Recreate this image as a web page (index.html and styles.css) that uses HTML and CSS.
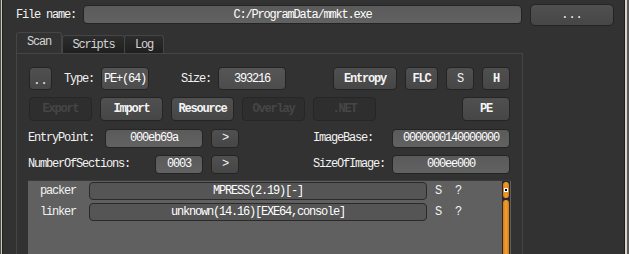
FILE: index.html
```html
<!DOCTYPE html>
<html>
<head>
  <title>Detect It Easy</title>
  <link rel="stylesheet" href="styles.css">
</head>
<body>

  <div class="frame">
    <div class="edge-left"></div>

    <div class="app">
      <div class="file-row">
        <span class="label file-label">File name:</span>
        <div class="field file-field">C:/ProgramData/mmkt.exe</div>
        <div class="btn browse-btn">...</div>
      </div>

      <div class="tabs">
        <div class="tab active tab-scan">Scan</div>
        <div class="tab tab-scripts">Scripts</div>
        <div class="tab tab-log">Log</div>
      </div>

      <div class="pane">
        <div class="row row-info">
          <div class="btn dots-btn">..</div>
          <span class="label lbl-type">Type:</span>
          <div class="field val-type">PE+(64)</div>
          <span class="label lbl-size">Size:</span>
          <div class="field val-size">393216</div>
          <div class="btn bold btn-entropy">Entropy</div>
          <div class="btn bold btn-flc">FLC</div>
          <div class="btn btn-s">S</div>
          <div class="btn bold btn-h">H</div>
        </div>

        <div class="row row-actions">
          <div class="btn bold disabled btn-wide">Export</div>
          <div class="btn bold btn-wide">Import</div>
          <div class="btn bold btn-wide">Resource</div>
          <div class="btn bold disabled btn-wide">Overlay</div>
          <div class="btn bold disabled btn-wide">.NET</div>
          <div class="btn bold btn-pe">PE</div>
        </div>

        <div class="row row-field">
          <span class="label lbl-entry">EntryPoint:</span>
          <div class="field val-entry">000eb69a</div>
          <div class="btn btn-go">&gt;</div>
          <span class="label lbl-right">ImageBase:</span>
          <div class="field val-right">0000000140000000</div>
        </div>

        <div class="row row-field">
          <span class="label lbl-sections">NumberOfSections:</span>
          <div class="field val-sections">0003</div>
          <div class="btn btn-go">&gt;</div>
          <span class="label lbl-right">SizeOfImage:</span>
          <div class="field val-right">000ee000</div>
        </div>

        <div class="results">
          <div class="result-list">
            <div class="result">
              <span class="label res-name">packer</span>
              <div class="res-value">MPRESS(2.19)[-]</div>
              <span class="label res-flag">S</span>
              <span class="label res-flag">?</span>
            </div>
            <div class="result">
              <span class="label res-name">linker</span>
              <div class="res-value">unknown(14.16)[EXE64,console]</div>
              <span class="label res-flag">S</span>
              <span class="label res-flag">?</span>
            </div>
          </div>
          <div class="scrollbar">
            <div class="scroll-handle"><span class="scroll-dot"></span></div>
            <div class="scroll-bar"></div>
          </div>
        </div>
      </div>
    </div>

    <div class="edge-right"></div>
  </div>

</body>
</html>
```

FILE: styles.css
```css
body {
  margin: 0;
  background-color: #323232;
  color: #f0f0f0;
  font-family: "Liberation Mono", monospace;
  font-size: 12px;
  letter-spacing: -1.2px;
}

.frame {
  display: flex;
  width: 629px;
  height: 254px;
  overflow: hidden;
}

.edge-left {
  width: 3px;
  background: linear-gradient(to right, #4a4a4a 0 1px, #cfcbc3 1px 2px, #1f1f1f 2px 3px);
}

.edge-right {
  width: 5px;
  background: linear-gradient(to right, #1f1f1f 0 1px, #d8d4cc 1px 3px, #5c5c5c 3px 5px);
}

.app {
  flex: 1;
  padding: 4px 0 0 13px;
}

.label {
  white-space: nowrap;
  color: #f2f2f2;
}

.field,
.btn {
  box-sizing: border-box;
  display: flex;
  align-items: center;
  justify-content: center;
  white-space: nowrap;
  border: 1px solid #242424;
  border-radius: 4px;
}

.field {
  background: linear-gradient(#5a5a5a, #626262);
  color: #ffffff;
}

.btn {
  background: linear-gradient(#505050, #464646);
  color: #f4f4f4;
}

.btn.bold {
  font-weight: bold;
}

.btn.disabled {
  background: #2e2e2e;
  border-color: #262626;
  color: #464646;
}

/* file name row */

.file-row {
  display: flex;
  align-items: center;
  height: 21px;
}

.file-label {
  width: 67px;
}

.file-field {
  width: 439px;
  height: 19px;
}

.browse-btn {
  width: 84px;
  height: 22px;
  margin-left: 8px;
  border-radius: 5px;
  letter-spacing: 0;
}

/* tabs */

.tabs {
  display: flex;
  align-items: flex-end;
  height: 21px;
  margin-top: 7px;
}

.tab {
  box-sizing: border-box;
  height: 18px;
  display: flex;
  align-items: center;
  justify-content: center;
  border: 1px solid #454545;
  border-bottom: none;
  border-radius: 3px 3px 0 0;
  background: linear-gradient(#2d2d2d, #1f1f1f);
  color: #d4d4d4;
}

.tab.active {
  height: 21px;
  background: #323232;
  padding-bottom: 2px;
}

.tab-scan {
  width: 46px;
}

.tab-scripts {
  width: 63px;
}

.tab-log {
  width: 40px;
  margin-left: -1px;
}

.pane {
  box-sizing: border-box;
  width: 507px;
  height: 260px;
  border: 1px solid #454545;
  padding: 13px 0 0 12px;
}

/* rows */

.row {
  display: flex;
  align-items: center;
}

.row-info {
  height: 23px;
}

.row-info .field,
.row-info .btn {
  height: 23px;
}

.dots-btn {
  width: 23px;
  letter-spacing: 0;
  padding-top: 4px;
}

.lbl-type,
.lbl-size {
  width: 37px;
  margin-left: 12px;
}

.lbl-size {
  margin-left: 32px;
}

.val-type {
  width: 48px;
  background: linear-gradient(#565656, #4c4c4c);
}

.val-size {
  width: 68px;
  background: linear-gradient(#565656, #4c4c4c);
}

.btn-entropy {
  width: 64px;
  margin-left: 47px;
}

.btn-flc {
  width: 33px;
  margin-left: 8px;
}

.btn-s,
.btn-h {
  width: 28px;
  margin-left: 8px;
}

.row-actions {
  height: 24px;
  margin-top: 7px;
  gap: 8px;
}

.row-actions .btn {
  height: 24px;
}

.btn-wide {
  width: 63px;
}

.btn-pe {
  width: 48px;
  margin-left: 78px;
}

.row-field {
  height: 18px;
  margin-top: 8px;
}

.row-field .field,
.row-field .btn {
  height: 19px;
}

.lbl-entry {
  width: 76px;
  margin-left: -1px;
}

.lbl-sections {
  width: 126px;
  margin-left: -1px;
}

.val-entry {
  width: 98px;
  margin-left: 1px;
}

.val-sections {
  width: 48px;
  margin-left: 1px;
}

.btn-go {
  width: 28px;
  margin-left: 8px;
}

.lbl-right {
  width: 79px;
  margin-left: 74px;
}

.val-right {
  width: 118px;
}

/* detection results */

.results {
  display: flex;
  width: 483px;
  height: 80px;
  margin: 7px 0 0 -1px;
  background: #606060;
  border-top: 1px solid #3a3a3a;
}

.result-list {
  flex: 1;
  padding: 1px 0 0 12px;
}

.result {
  display: flex;
  align-items: center;
  height: 18px;
  margin-bottom: 3px;
}

.res-name {
  width: 49px;
}

.res-value {
  box-sizing: border-box;
  width: 338px;
  height: 18px;
  display: flex;
  align-items: center;
  justify-content: center;
  background: #555555;
  border: 1px solid #2a2a2a;
  border-radius: 4px;
  color: #ffffff;
}

.res-flag {
  width: 20px;
  margin-left: 8px;
}

.res-flag + .res-flag {
  margin-left: 0;
}

.scrollbar {
  width: 8px;
  margin-right: 1px;
  background: #2a2a2a;
  display: flex;
  flex-direction: column;
  align-items: center;
  gap: 2px;
  padding-top: 1px;
}

.scroll-handle {
  width: 6px;
  height: 16px;
  border-radius: 3px;
  background: linear-gradient(to right, #d27a14, #f5a032, #d27a14);
  display: flex;
  align-items: center;
  justify-content: center;
}

.scroll-dot {
  width: 2px;
  height: 2px;
  background: #000;
  border: 1px solid #ffffff;
}

.scroll-bar {
  flex: 1;
  width: 6px;
  border-radius: 3px 3px 0 0;
  background: linear-gradient(to right, #d27a14, #f5a032, #d27a14);
}
```
